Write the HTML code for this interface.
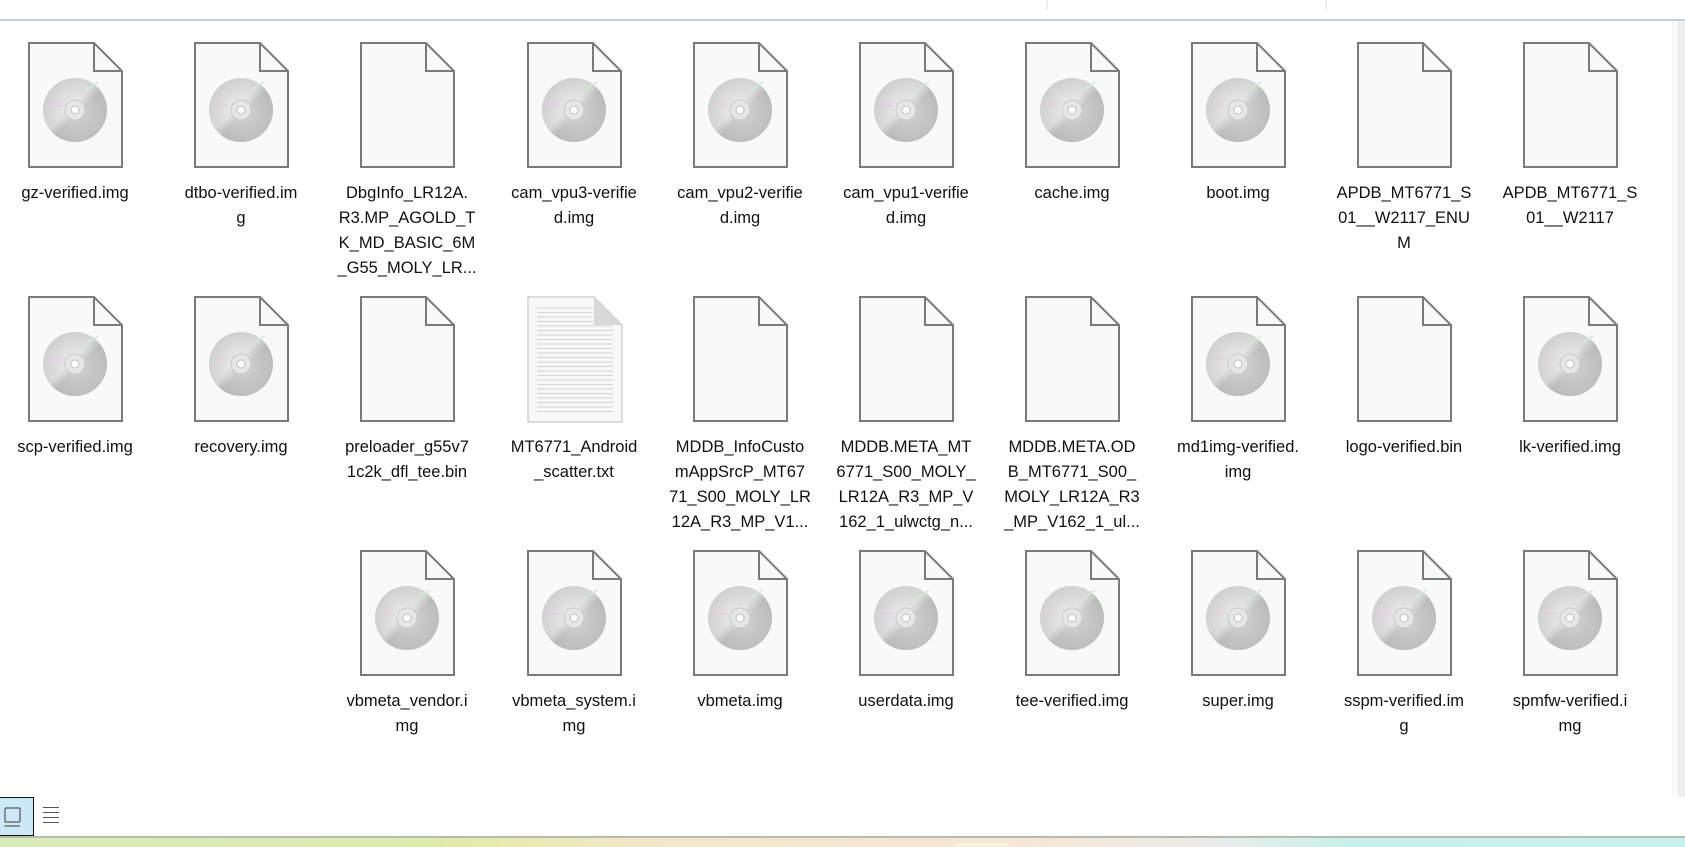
<!DOCTYPE html>
<html><head><meta charset="utf-8"><style>
html,body{margin:0;padding:0;}
body{width:1685px;height:847px;position:relative;overflow:hidden;background:#fff;font-family:"Liberation Sans",sans-serif;}
.top{position:absolute;left:0;top:19px;width:1685px;height:2px;background:#c2d0d1;}
.sep{position:absolute;top:0;width:2px;height:10px;background:#eee;}
.it{position:absolute;width:160px;}
.it svg{position:absolute;left:33px;top:0;}
.lb{position:absolute;top:139px;left:0;width:160px;text-align:center;font-size:16.5px;line-height:25px;color:#111;}
.sb{position:absolute;left:1677px;top:21px;width:8px;height:776px;background:#efefef;}
.sb2{position:absolute;left:1672px;top:21px;width:2px;height:776px;background:#f6f6f6;}
.task{position:absolute;left:0;top:836px;width:1685px;height:11px;background:linear-gradient(90deg,#d8ebb8 0%,#dfeaae 25%,#e8eab0 30%,#f3e8cc 40%,#f6e6d6 60%,#ececec 72%,#c8f0ea 80%,#c8f2ee 100%);border-top:2px solid #b4bcae;box-sizing:border-box;}
</style></head><body>
<svg width="0" height="0" style="position:absolute">
<defs>
<radialGradient id="dg" cx="50%" cy="50%" r="50%">
<stop offset="0" stop-color="#f0f0f0"/><stop offset="0.6" stop-color="#cfcfcf"/><stop offset="1" stop-color="#bdbdbd"/>
</radialGradient>
<linearGradient id="dl" x1="0" y1="0" x2="1" y2="1">
<stop offset="0" stop-color="#e0e0e0"/><stop offset="0.45" stop-color="#f0f0f0"/><stop offset="0.55" stop-color="#b5b5b5"/><stop offset="1" stop-color="#c8c8c8"/>
</linearGradient>
<symbol id="doc" viewBox="0 0 96 127">
<path d="M1 1 H66 L94 29 V125 H1 Z" fill="#f9f9f9" stroke="#7a7a7a" stroke-width="2"/>
<path d="M66 1 V29 H94" fill="none" stroke="#7a7a7a" stroke-width="2"/>
</symbol>
<symbol id="disc" viewBox="0 0 96 127">
<use href="#doc"/>
<circle cx="47" cy="68" r="32" fill="url(#dl)"/>
<circle cx="47" cy="68" r="32" fill="url(#dg)" opacity="0.55"/>
<path d="M20 62 L34 64" stroke="#e9c8e6" stroke-width="1.5"/>
<path d="M58 48 L70 40" stroke="#d0ecd0" stroke-width="1.5"/>
<circle cx="47" cy="68" r="10" fill="#e6e6e6" stroke="#c8c8c8"/>
<circle cx="47" cy="68" r="4" fill="#fff" stroke="#c0c0c0"/>
</symbol>
<symbol id="txt" viewBox="0 0 96 127">
<path d="M1 1 H67 L95 29 V126 H1 Z" fill="#f8f8f8" stroke="#d0d0d0" stroke-width="1.5"/>
<g stroke="#d4d4d4" stroke-width="1">
<path d="M10 12H66M10 16.5H66M10 21H66M10 25.5H66M10 30H86M10 34.5H86M10 39H86M10 43.5H86M10 48H86M10 52.5H86M10 57H86M10 61.5H86M10 66H86M10 70.5H86M10 75H86M10 79.5H86M10 84H86M10 88.5H86M10 93H86M10 97.5H86M10 102H86M10 106.5H86M10 111H86M10 115.5H86"/>
</g>
<path d="M67 1 L95 29 H67 Z" fill="#d8d8d8"/>
</symbol>
</defs></svg>

<div class="sep" style="left:1046px"></div>
<div class="sep" style="left:1325px"></div>
<div class="top"></div>
<div class="sb2"></div><div class="sb"></div>

<div class="it" style="left:-5px;top:42px"><svg width="96" height="127"><use href="#disc"/></svg><div class="lb">gz-verified.img</div></div>
<div class="it" style="left:161px;top:42px"><svg width="96" height="127"><use href="#disc"/></svg><div class="lb">dtbo-verified.im<br>g</div></div>
<div class="it" style="left:327px;top:42px"><svg width="96" height="127"><use href="#doc"/></svg><div class="lb">DbgInfo_LR12A.<br>R3.MP_AGOLD_T<br>K_MD_BASIC_6M<br>_G55_MOLY_LR...</div></div>
<div class="it" style="left:494px;top:42px"><svg width="96" height="127"><use href="#disc"/></svg><div class="lb">cam_vpu3-verifie<br>d.img</div></div>
<div class="it" style="left:660px;top:42px"><svg width="96" height="127"><use href="#disc"/></svg><div class="lb">cam_vpu2-verifie<br>d.img</div></div>
<div class="it" style="left:826px;top:42px"><svg width="96" height="127"><use href="#disc"/></svg><div class="lb">cam_vpu1-verifie<br>d.img</div></div>
<div class="it" style="left:992px;top:42px"><svg width="96" height="127"><use href="#disc"/></svg><div class="lb">cache.img</div></div>
<div class="it" style="left:1158px;top:42px"><svg width="96" height="127"><use href="#disc"/></svg><div class="lb">boot.img</div></div>
<div class="it" style="left:1324px;top:42px"><svg width="96" height="127"><use href="#doc"/></svg><div class="lb">APDB_MT6771_S<br>01__W2117_ENU<br>M</div></div>
<div class="it" style="left:1490px;top:42px"><svg width="96" height="127"><use href="#doc"/></svg><div class="lb">APDB_MT6771_S<br>01__W2117</div></div>

<div class="it" style="left:-5px;top:296px"><svg width="96" height="127"><use href="#disc"/></svg><div class="lb">scp-verified.img</div></div>
<div class="it" style="left:161px;top:296px"><svg width="96" height="127"><use href="#disc"/></svg><div class="lb">recovery.img</div></div>
<div class="it" style="left:327px;top:296px"><svg width="96" height="127"><use href="#doc"/></svg><div class="lb">preloader_g55v7<br>1c2k_dfl_tee.bin</div></div>
<div class="it" style="left:494px;top:296px"><svg width="96" height="127"><use href="#txt"/></svg><div class="lb">MT6771_Android<br>_scatter.txt</div></div>
<div class="it" style="left:660px;top:296px"><svg width="96" height="127"><use href="#doc"/></svg><div class="lb">MDDB_InfoCusto<br>mAppSrcP_MT67<br>71_S00_MOLY_LR<br>12A_R3_MP_V1...</div></div>
<div class="it" style="left:826px;top:296px"><svg width="96" height="127"><use href="#doc"/></svg><div class="lb">MDDB.META_MT<br>6771_S00_MOLY_<br>LR12A_R3_MP_V<br>162_1_ulwctg_n...</div></div>
<div class="it" style="left:992px;top:296px"><svg width="96" height="127"><use href="#doc"/></svg><div class="lb">MDDB.META.OD<br>B_MT6771_S00_<br>MOLY_LR12A_R3<br>_MP_V162_1_ul...</div></div>
<div class="it" style="left:1158px;top:296px"><svg width="96" height="127"><use href="#disc"/></svg><div class="lb">md1img-verified.<br>img</div></div>
<div class="it" style="left:1324px;top:296px"><svg width="96" height="127"><use href="#doc"/></svg><div class="lb">logo-verified.bin</div></div>
<div class="it" style="left:1490px;top:296px"><svg width="96" height="127"><use href="#disc"/></svg><div class="lb">lk-verified.img</div></div>

<div class="it" style="left:327px;top:550px"><svg width="96" height="127"><use href="#disc"/></svg><div class="lb">vbmeta_vendor.i<br>mg</div></div>
<div class="it" style="left:494px;top:550px"><svg width="96" height="127"><use href="#disc"/></svg><div class="lb">vbmeta_system.i<br>mg</div></div>
<div class="it" style="left:660px;top:550px"><svg width="96" height="127"><use href="#disc"/></svg><div class="lb">vbmeta.img</div></div>
<div class="it" style="left:826px;top:550px"><svg width="96" height="127"><use href="#disc"/></svg><div class="lb">userdata.img</div></div>
<div class="it" style="left:992px;top:550px"><svg width="96" height="127"><use href="#disc"/></svg><div class="lb">tee-verified.img</div></div>
<div class="it" style="left:1158px;top:550px"><svg width="96" height="127"><use href="#disc"/></svg><div class="lb">super.img</div></div>
<div class="it" style="left:1324px;top:550px"><svg width="96" height="127"><use href="#disc"/></svg><div class="lb">sspm-verified.im<br>g</div></div>
<div class="it" style="left:1490px;top:550px"><svg width="96" height="127"><use href="#disc"/></svg><div class="lb">spmfw-verified.i<br>mg</div></div>

<div style="position:absolute;left:0;top:797px;width:34px;height:39px;background:#cce8f6;border:1px solid #111;border-left:none;box-sizing:border-box;"></div>
<svg style="position:absolute;left:0;top:797px" width="70" height="40">
<rect x="5" y="11" width="15" height="14" fill="none" stroke="#555" stroke-width="1.2" rx="1"/>
<path d="M4.5 29H20" stroke="#555" stroke-width="1.2"/>
<path d="M43 10.5H59M43 15.5H59M43 20.5H59M43 25.5H59" stroke="#555" stroke-width="1"/>
</svg>
<div class="task"></div>
<div style="position:absolute;left:954px;top:843px;width:56px;height:4px;background:#f6f2dc;border-radius:3px 3px 0 0;"></div>
</body></html>
